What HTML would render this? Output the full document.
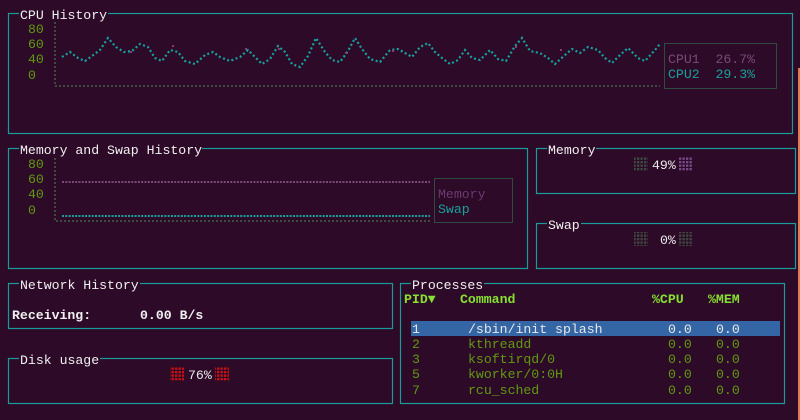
<!DOCTYPE html>
<html><head><style>
html,body{margin:0;padding:0;background:#2d0a27;width:800px;height:420px;overflow:hidden}
svg{display:block}
text{font-family:"Liberation Mono","DejaVu Sans Mono",monospace;font-size:13.2px;white-space:pre}
</style></head><body>
<svg width="800" height="420" viewBox="0 0 800 420">
<defs>
<pattern id="dg" width="3.5" height="3.5" patternUnits="userSpaceOnUse"><rect width="2.3" height="2.3" fill="#3e4a40"/></pattern>
<pattern id="dp" width="3.5" height="3.5" patternUnits="userSpaceOnUse"><rect width="2.3" height="2.3" fill="#7a4a88"/></pattern>
<pattern id="dr" width="3.5" height="3.5" patternUnits="userSpaceOnUse"><rect width="2.3" height="2.3" fill="#d01010"/></pattern>
</defs>
<rect width="800" height="420" fill="#2d0a27"/>
<rect x="798" y="68" width="2" height="352" fill="#e07a50"/>
<g fill="none" stroke="#1a9a98" stroke-width="1.2">
<rect x="8.5" y="13.5" width="784" height="120"/>
<rect x="8.5" y="148.5" width="519" height="120"/>
<rect x="536.5" y="148.5" width="259" height="45"/>
<rect x="536.5" y="223.5" width="259" height="45"/>
<rect x="8.5" y="283.5" width="384" height="45"/>
<rect x="8.5" y="358.5" width="384" height="45"/>
<rect x="400.5" y="283.5" width="384" height="120"/>
</g>
<g fill="#2d0a27">
<rect x="19" y="8" width="89" height="12"/>
<rect x="19" y="143" width="183" height="12"/>
<rect x="547" y="143" width="49" height="12"/>
<rect x="547" y="218" width="34" height="12"/>
<rect x="19" y="278" width="121" height="12"/>
<rect x="19" y="353" width="81" height="12"/>
<rect x="411" y="278" width="73" height="12"/>
</g>
<g fill="#f0f0f0">
<text x="20" y="19">CPU History</text>
<text x="20" y="154">Memory and Swap History</text>
<text x="548" y="154">Memory</text>
<text x="548" y="229">Swap</text>
<text x="20" y="289">Network History</text>
<text x="20" y="364">Disk usage</text>
<text x="412" y="289">Processes</text>
</g>
<g fill="#5f9a10">
<text x="28" y="33">80</text><text x="28" y="48">60</text><text x="28" y="63">40</text><text x="28" y="79">0</text>
<text x="28" y="168">80</text><text x="28" y="183">60</text><text x="28" y="198">40</text><text x="28" y="214">0</text>
</g>
<g stroke="#3e4a40" stroke-width="2" stroke-dasharray="2 2" fill="none">
<path d="M55 22V86H660"/>
<path d="M55 158V221H430"/>
</g>
<polyline fill="none" stroke="#15a3a0" stroke-width="2.2" stroke-dasharray="2 2.5" points="62,57 70,52 78,58 85,61 92,56 100,50 108,38 116,47 124,52 132,51 140,44 148,47 155,58 162,61 170,50 178,52 185,61 195,64 205,55 213,52 220,57 230,61 240,57 248,50 255,57 262,64 270,59 278,46 285,52 292,64 300,67 308,56 316,38 325,52 332,60 340,62 348,51 355,38 362,49 370,59 380,62 390,50 398,49 405,53 412,57 420,47 428,43 435,52 442,58 450,64 458,60 465,50 472,58 480,60 490,50 498,59 506,61 515,46 522,38 530,51 540,53 548,58 555,64 565,55 572,49 580,53 588,47 598,50 605,58 612,63 620,55 628,48 638,58 645,61 655,50 660,44"/>
<g fill="#8a3a72"><rect x="130" y="51" width="2" height="2"/><rect x="172" y="45" width="2" height="2"/><rect x="245" y="48" width="2" height="2"/><rect x="278" y="48" width="2" height="2"/><rect x="345" y="52" width="2" height="2"/><rect x="392" y="50" width="2" height="2"/><rect x="515" y="46" width="2" height="2"/><rect x="560" y="49" width="2" height="2"/></g>
<rect x="664.5" y="43.5" width="112" height="45" fill="none" stroke="#2f4a40" stroke-width="1"/>
<text x="668" y="63" fill="#7a4a78">CPU1  26.7%</text>
<text x="668" y="78" fill="#18a09c">CPU2  29.3%</text>
<g stroke-width="2" stroke-dasharray="2 1.3" fill="none">
<path d="M62 182H430" stroke="#7a4a78"/>
<path d="M62 216H430" stroke="#18a09c"/>
</g>
<rect x="434.5" y="178.5" width="78" height="44" fill="none" stroke="#2f4a40"/>
<text x="438" y="198" fill="#6a3a70">Memory</text>
<text x="438" y="213" fill="#18a09c">Swap</text>
<rect x="634" y="157" width="14" height="14" fill="url(#dg)"/>
<rect x="634" y="232" width="14" height="14" fill="url(#dg)"/>
<rect x="678" y="232" width="14" height="14" fill="url(#dg)"/>
<rect x="678" y="157" width="14" height="14" fill="url(#dp)"/>
<text x="652" y="169" fill="#e8e8e8">49%</text>
<text x="660" y="244" fill="#e8e8e8">0%</text>
<g fill="#f0f0f0" font-weight="bold"><text x="12" y="319">Receiving:</text><text x="140" y="319">0.00 B/s</text></g>
<rect x="170" y="367" width="14" height="14" fill="url(#dr)"/>
<rect x="215" y="367" width="14" height="14" fill="url(#dr)"/>
<text x="188" y="379" fill="#e8e8e8">76%</text>
<g fill="#86e030" font-weight="bold">
<text x="404" y="303">PID▼</text><text x="460" y="303">Command</text><text x="652" y="303">%CPU</text><text x="708" y="303">%MEM</text>
</g>
<rect x="411" y="321" width="369" height="15" fill="#3465a4"/>
<g fill="#e8e8e8"><text x="412" y="333">1</text><text x="468" y="333">/sbin/init splash</text><text x="668" y="333">0.0</text><text x="716" y="333">0.0</text></g>
<g fill="#5f9a10">
<text x="412" y="348">2</text><text x="468" y="348">kthreadd</text><text x="668" y="348">0.0</text><text x="716" y="348">0.0</text>
<text x="412" y="363">3</text><text x="468" y="363">ksoftirqd/0</text><text x="668" y="363">0.0</text><text x="716" y="363">0.0</text>
<text x="412" y="378">5</text><text x="468" y="378">kworker/0:0H</text><text x="668" y="378">0.0</text><text x="716" y="378">0.0</text>
<text x="412" y="394">7</text><text x="468" y="394">rcu_sched</text><text x="668" y="394">0.0</text><text x="716" y="394">0.0</text>
</g>
</svg>
</body></html>
